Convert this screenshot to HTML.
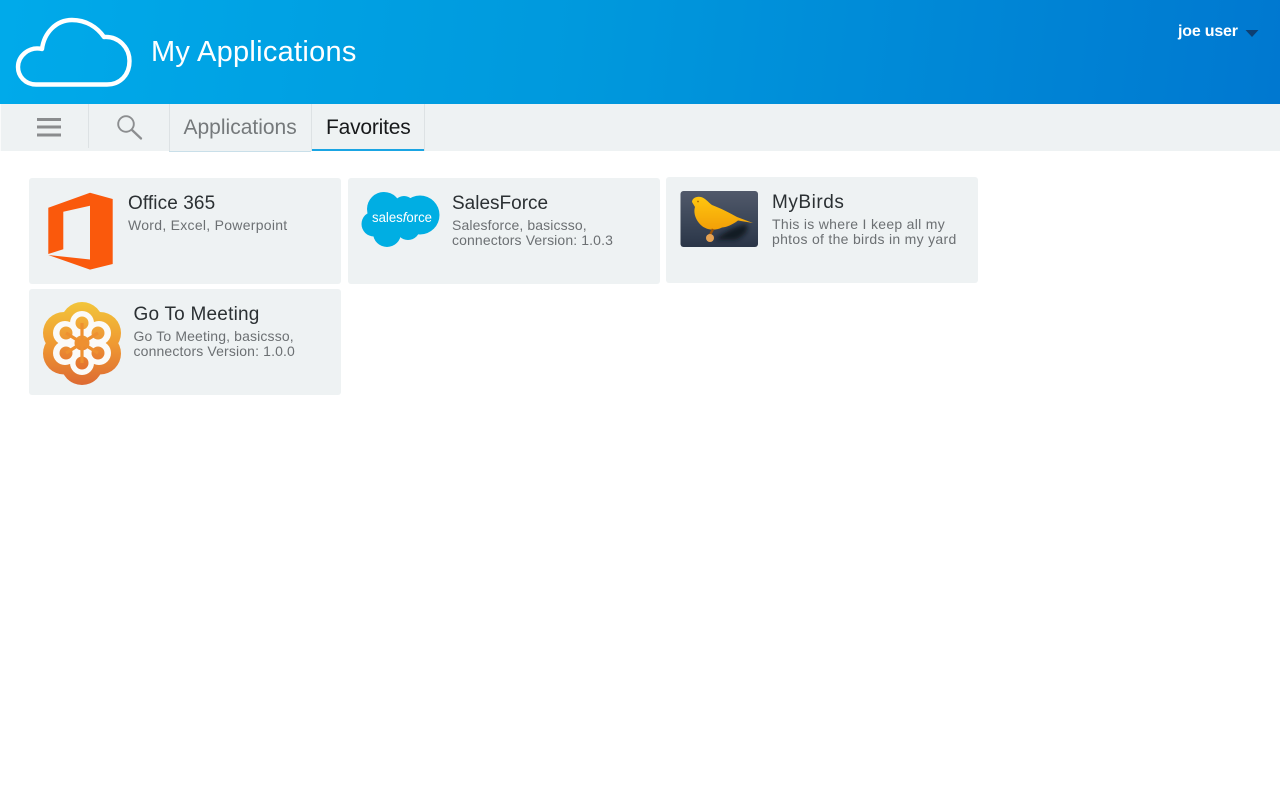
<!DOCTYPE html>
<html><head><meta charset="utf-8"><title>My Applications</title>
<style>
html,body{margin:0;padding:0;background:#fff;width:1280px;height:800px;overflow:hidden}
body{font-family:"Liberation Sans",Arial,sans-serif;position:relative}
.a{position:absolute;white-space:nowrap}
#hd{left:0;top:0;width:1280px;height:103.5px;background:linear-gradient(97deg,#00aaea 0%,#0099dd 45%,#0078d0 100%)}
#bar{left:0;top:104px;width:1280px;height:47px;background:#eef2f3}
.div{top:104px;width:1px;height:44px;background:#dde2e4}
.card{background:#eef2f3;width:312px;height:106px;border-radius:3px}
.t{font-size:19px;line-height:22px;color:#2b3033;filter:blur(.25px)}
.s{font-size:14px;line-height:15px;color:#6c7073;filter:blur(.25px)}
svg{position:absolute;left:0;top:0;filter:blur(.3px)}
</style></head><body>
<div class="a" id="hd"></div>
<div class="a" style="left:151px;top:34px;font-size:29px;line-height:36px;color:#fff;letter-spacing:.28px;filter:blur(.25px)">My Applications</div>
<div class="a" style="left:1178px;top:23px;font-size:16px;line-height:18px;color:#fff;font-weight:bold;letter-spacing:-.2px;filter:blur(.25px)">joe user</div>
<div class="a" id="bar"></div>
<div class="a" style="left:0;top:104px;width:1px;height:47px;background:#fafbfb"></div>
<div class="a div" style="left:88px"></div>
<div class="a div" style="left:169px;height:47px"></div>
<div class="a div" style="left:311px;height:47px"></div>
<div class="a div" style="left:424px;height:47px"></div>
<div class="a" style="left:169px;top:151px;width:142px;height:1px;background:#c9dfe9"></div>
<div class="a" style="left:312px;top:149px;width:112px;height:2px;background:#1aa5e3"></div>
<div class="a" style="left:183.500px;top:115px;font-size:21px;line-height:25px;color:#75797b;filter:blur(.25px)">Applications</div>
<div class="a" style="left:326px;top:115px;font-size:21px;line-height:25px;color:#17191b;letter-spacing:-.2px;filter:blur(.25px)">Favorites</div>

<div class="a card" style="left:29px;top:178px"></div>
<div class="a card" style="left:348px;top:178px"></div>
<div class="a card" style="left:666px;top:177px"></div>
<div class="a card" style="left:29px;top:289px"></div>

<div class="a t" style="left:128px;top:193px;letter-spacing:.1px">Office 365</div>
<div class="a s" style="left:128px;top:218px;letter-spacing:.28px">Word, Excel, Powerpoint</div>
<div class="a t" style="left:452px;top:193px">SalesForce</div>
<div class="a s" style="left:452px;top:218px;letter-spacing:.12px">Salesforce, basicsso,<br>connectors Version: 1.0.3</div>
<div class="a t" style="left:772px;top:192px;letter-spacing:.55px">MyBirds</div>
<div class="a s" style="left:772px;top:217px;letter-spacing:.3px">This is where I keep all my<br>phtos of the birds in my yard</div>
<div class="a t" style="left:133.500px;top:304px;letter-spacing:.22px">Go To Meeting</div>
<div class="a s" style="left:133.500px;top:329px;letter-spacing:.14px">Go To Meeting, basicsso,<br>connectors Version: 1.0.0</div>

<svg width="1280" height="800" viewBox="0 0 1280 800">
<defs>
<linearGradient id="gm" gradientUnits="userSpaceOnUse" x1="0" y1="302" x2="0" y2="385"><stop offset="0" stop-color="#f2c53a"/><stop offset=".5" stop-color="#ef9a32"/><stop offset="1" stop-color="#dd6a33"/></linearGradient>
<linearGradient id="gi" gradientUnits="userSpaceOnUse" x1="0" y1="316" x2="0" y2="370"><stop offset="0" stop-color="#f3b23a"/><stop offset="1" stop-color="#e4702e"/></linearGradient>
<linearGradient id="bg" x1="0" y1="0" x2="0" y2="1"><stop offset="0" stop-color="#51596a"/><stop offset=".55" stop-color="#3b4658"/><stop offset="1" stop-color="#2a3547"/></linearGradient>
<linearGradient id="by" x1="0" y1="0" x2="0" y2="1"><stop offset="0" stop-color="#ffc60e"/><stop offset="1" stop-color="#f29f08"/></linearGradient>
<filter id="sh" x="-30%" y="-30%" width="160%" height="160%"><feGaussianBlur stdDeviation="2"/></filter>
</defs>
<!-- header cloud -->
<path d="M42 49 C44 33 56 20 72 20 C86 20 97 27 104 37 C119 36 129.500 48 129.500 61 C129.500 75 120 84.500 107 84.500 L36 84.500 C25 84.500 18 76 18 67 C18 56 29 46 42 49 Z" fill="none" stroke="#fff" stroke-width="4.400" stroke-linejoin="round"/>
<!-- user caret -->
<path d="M1245.500 30 H1258.500 L1252 37 Z" fill="#0d3f72"/>
<!-- hamburger -->
<path d="M37 119.500H61M37 127H61M37 135H61" stroke="#8a8c8e" stroke-width="3" fill="none"/>
<!-- search -->
<circle cx="126" cy="124" r="7.800" fill="none" stroke="#8c8e90" stroke-width="1.900"/>
<path d="M132 130 L141 138.500" stroke="#8c8e90" stroke-width="2.300" stroke-linecap="round"/>
<!-- office -->
<path d="M48.300 207.700 L90 192.700 L112.700 199 V264 L90 269.600 L48.300 255 L90 259.500 V205.700 L63.300 211.700 V249.300 L48.300 254 Z" fill="#fa590c"/>
<!-- salesforce -->
<g fill="#00aee3">
<circle cx="384" cy="209" r="17"/><circle cx="404" cy="207" r="11"/><circle cx="420" cy="215" r="19.500"/><circle cx="374" cy="224" r="12.500"/><circle cx="387" cy="233" r="14"/><circle cx="408" cy="228" r="12"/><rect x="375" y="205" width="45" height="26"/>
</g>
<text x="372" y="222" font-family="Liberation Sans,sans-serif" font-size="13.500" fill="#fff" textLength="60" lengthAdjust="spacingAndGlyphs">sales<tspan font-style="italic">f</tspan>orce</text>
<!-- bird -->
<rect x="680.500" y="191" width="77.500" height="56" rx="3" fill="url(#bg)"/>
<path d="M716 240 C722 233 735 226 746 224 C750 228 746 236 735 240 Z" fill="#10161f" opacity=".85" filter="url(#sh)"/>
<path d="M692 202 C692 198 697 196 701 197 C705 198 708 202 712 205 C720 208 730 213 737 217 L753 223 L738 220.500 C732 225 727 227 722 227.500 C715 231 707 230 702 226 C696 221 693 213 695 207 Z" fill="url(#by)"/>
<path d="M713 229 L710 235" stroke="#9c5508" stroke-width="2.500"/>
<circle cx="710" cy="238" r="4" fill="#e6a252"/>
<circle cx="698" cy="201.500" r=".9" fill="#a56400"/>
<!-- gotomeeting -->
<g fill="url(#gm)">
<circle cx="82" cy="323" r="21"/><circle cx="100" cy="333" r="21"/><circle cx="100" cy="353.500" r="21"/><circle cx="82" cy="364" r="21"/><circle cx="64" cy="353.500" r="21"/><circle cx="64" cy="333" r="21"/><circle cx="82" cy="343" r="30"/>
</g>
<g fill="#fbfaf8">
<circle cx="82" cy="323" r="12"/><circle cx="99" cy="333" r="12"/><circle cx="99" cy="353" r="12"/><circle cx="82" cy="363" r="12"/><circle cx="65" cy="353" r="12"/><circle cx="65" cy="333" r="12"/><circle cx="82" cy="343" r="22"/>
</g>
<g fill="url(#gi)">
<circle cx="82" cy="323" r="6.500"/><circle cx="98" cy="333" r="6.500"/><circle cx="98" cy="353" r="6.500"/><circle cx="82" cy="363" r="6.500"/><circle cx="66" cy="353" r="6.500"/><circle cx="66" cy="333" r="6.500"/><circle cx="82" cy="343" r="7.500"/>
</g>
<path d="M82 323V363M98 333L66 353M98 353L66 333" stroke="#ee9030" stroke-width="3.200" fill="none"/>
</svg>
</body></html>
